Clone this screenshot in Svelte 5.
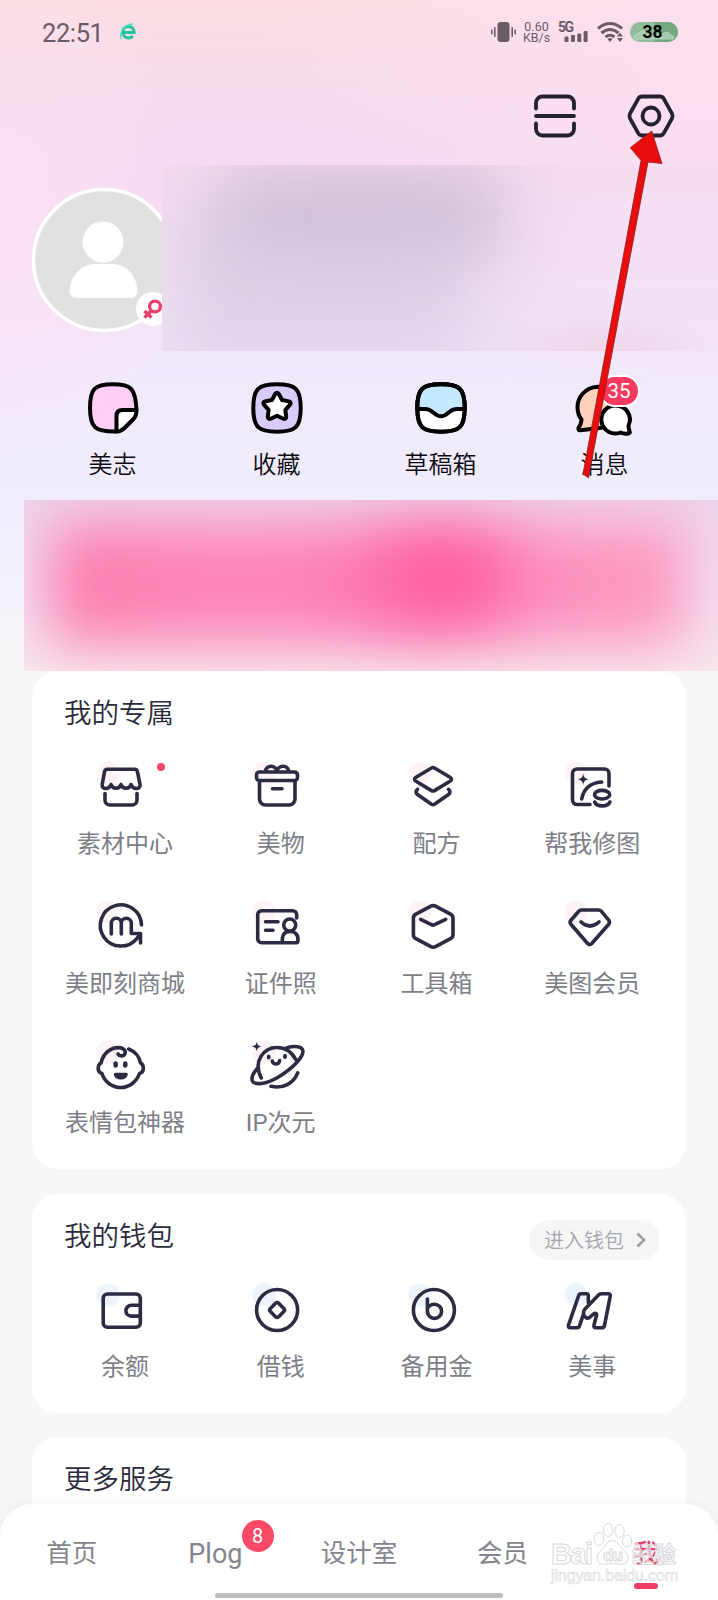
<script lang="ts">
	type Entry = { label: string; stroke: string; fill?: string; dot?: boolean };

	const exclusive: Entry[] = [
		{
			label: '素材中心',
			stroke:
				'M14.5 10.3h27a3 3 0 0 1 3 2.5L47 25.5C47.7 30.8 40 31 38 25.5 36.5 30.5 29.5 30.5 28 25.5 26.5 30.5 19.5 30.5 18 25.5 16 31 8.5 30.8 9.2 25.5l2.3-12.7a3 3 0 0 1 3-2.5zM12 34.5V41a5 5 0 0 0 5 5h22a5 5 0 0 0 5-5v-6.5',
			dot: true
		},
		{
			label: '美物',
			stroke:
				'M10.5 13h35a3 3 0 0 1 3 3v2.5a3 3 0 0 1-3 3h-35a3 3 0 0 1-3-3V16a3 3 0 0 1 3-3zM10.5 22v18a6 6 0 0 0 6 6h23.5a6 6 0 0 0 6-6V22M23.5 29.7h9.5M16.5 12.5C17 5.5 27 5.5 28 12.5 29 5.5 39 5.5 40 12.5'
		},
		{
			label: '配方',
			stroke:
				'M26.5 9q1.5-.8 3 0l15.5 9.3q3 2 0 4L29.5 31.6q-1.5.8-3 0L11 22.3q-3-2 0-4zM12.5 30.3q-3 2.7 0 5.2l14 9.8q1.5.9 3 0l14-9.8q3-2.5 0-5.2'
		},
		{
			label: '帮我修图',
			stroke:
				'M29 45.5H16a4.5 4.5 0 0 1-4.5-4.5V14.5A4.5 4.5 0 0 1 16 10h27.5a4.5 4.5 0 0 1 4.5 4.5V27M20.7 40C22.5 30.5 29 23.8 40.7 23M33.5 35.7a7.6 4.3 0 1 0 15.2 0a7.6 4.3 0 1 0-15.2 0M33.7 43c2 5.2 13 5.2 15.2 0',
			fill: 'M22.2 14.5c.7 4 1.7 5 5.6 5.8-3.900.8-4.900 1.800-5.600 5.800-.7-4-1.700-5-5.600-5.800 3.900-.8 4.900-1.800 5.600-5.800z'
		},
		{
			label: '美即刻商城',
			stroke:
				'M48.5 27A20.6 20.6 0 1 0 44 40.3L47.5 36M18.3 36V25.3a5 5 0 0 1 10 0V36M28.3 25.3a5 5 0 0 1 10 0v10.2h9.2V45'
		},
		{
			label: '证件照',
			stroke:
				'M47.7 20v-3.3a4 4 0 0 0-4-4H12.7a4 4 0 0 0-4 4v24a4 4 0 0 0 4 4H33.5M16.5 23.7H29M16.5 32.3H24M34.7 27a6 6 0 1 0 12 0a6 6 0 1 0-12 0M33.5 44.7c-1-9 3-11.2 7.3-11.2s8.7 2.2 8.2 9q-.2 2.2-2.5 2.2z'
		},
		{
			label: '工具箱',
			stroke:
				'M25.9 8.2q2.3-1.2 4.6 0l15 8q2.5 1.3 2.5 4v16.5q0 2.7-2.5 4l-15 8q-2.3 1.2-4.6 0l-15-8q-2.5-1.3-2.5-4V20.2q0-2.7 2.5-4zM15.7 21.3L28 27.3l12.7-6'
		},
		{
			label: '美图会员',
			stroke:
				'M20.5 12h17q1.7 0 2.7 1.2l7.5 9q1.6 2 0 4L30.8 45.5q-2.1 2-4.2 0L9.9 26.2q-1.6-2 0-4l7.9-9Q18.8 12 20.5 12zM20 24q9 8 18 0'
		},
		{
			label: '表情包神器',
			stroke:
				'M35.7 11C42 13.5 46.5 19 47.3 24.5 51.5 27.5 51.5 34 46.5 35.5 43.5 44 36 49.5 27.7 49.5S11.5 44 9 35.5C4 34 4 27.5 8.3 24.5 10 15 18 9.6 25.5 9.6c5 0 7.5 3 6.5 6s-5.5 3-7 .4',
			fill: 'M22.6 23.3a2 2.8 0 0 1 0 6.5a2 2.8 0 0 1 0-6.5zM32.3 23.3a2 2.8 0 0 1 0 6.5a2 2.8 0 0 1 0-6.5zM22.5 34.7h11q1.5 0 1.3 1.5c-.7 7-13.3 7-14 0q-.2-1.5 1.7-1.5z'
		},
		{
			label: 'IP次元',
			stroke:
				'M12.3 40C3.5 23 15 9.5 28 9.5c9 0 15 5 18.6 11.8M38 9.8C46 7.5 52.5 8.5 53.7 12c2 6-10 18.5-24.2 27C17 46.5 5 47.5 3.2 42.5 2.2 38.5 5 34 8.5 30.3M22 48.3c12 2.8 22.5-3 26.7-13.5M23.3 23c.8 4 6.5 4 7.3-.4',
			fill: 'M19.7 16.4a2 2.6 0 0 1 0 5.2a2 2.6 0 0 1 0-5.2zM36 15.8a2 2.6 0 0 1 0 5.2a2 2.6 0 0 1 0-5.2zM7.7 3.4c.7 3.600 1.400 4.300 5 5-3.600.7-4.300 1.400-5 5-.7-3.600-1.400-4.300-5-5 3.600-.7 4.300-1.400 5-5z'
		}
	];

	const wallet: Entry[] = [
		{
			label: '余额',
			stroke:
				'M14.5 13H43a4.3 4.3 0 0 1 4.3 4.3V42A4.3 4.3 0 0 1 43 46.3H14.5A4.3 4.3 0 0 1 10.2 42V17.3A4.3 4.3 0 0 1 14.5 13zM47 24.3h-8.7a5.4 5.4 0 0 0 0 10.8H47'
		},
		{
			label: '借钱',
			stroke:
				'M7.6 29a20.5 20.5 0 1 0 41 0a20.5 20.5 0 1 0-41 0M26.5 22.3q1.6-1.5 3.2 0l5.1 5.1q1.5 1.6 0 3.2l-5.1 5.1q-1.6 1.5-3.2 0l-5.1-5.1q-1.5-1.6 0-3.2z'
		},
		{
			label: '备用金',
			stroke:
				'M8.4 29a20.5 20.5 0 1 0 41 0a20.5 20.5 0 1 0-41 0M22.4 18V30.3a7.1 7.1 0 1 0 7.1-7.1q-4.5 0-7.1 4'
		},
		{
			label: '美事',
			stroke:
				'M27.3 21.5V14.8q0-2-1.8-2H20.2q-2.2 0-2.7 2.2L7.5 44.2q-.6 2.5 1.8 2.5H16q2 0 2.5-1.9L22.5 33M38 13.6q1-.8 2.5-.8h6.7q2.5 0 2 2.5L43.5 44.5q-.5 2.2-2.7 2.2H35q-2.6 0-2-2.5l2.5-10c.4-2-1.5-2.5-2.8-1.4l-4.2 3.7c-3 2-6-1.5-6-4.8q0-2.200 1.500-3.700z'
		}
	];

	const tabs = ['首页', 'Plog', '设计室', '会员', '我'];
	const active = '我';

	const SQUIRCLE =
		'M28 4.3C46.5 4.3 51.7 8.5 51.7 28S46.5 51.7 28 51.7 4.3 47.5 4.3 28 9.5 4.3 28 4.3z';
</script>

{#snippet grid(items: Entry[], tint: string)}
	<div class="grid">
		{#each items as item}
			<button class="entry">
				<span class="entry-icon">
					<svg width="56" height="56" viewBox="0 0 56 56">
						<circle class={tint} cx="15" cy="14" r="11.5" />
						<path class="line" d={item.stroke} />
						{#if item.fill}<path class="solid" d={item.fill} />{/if}
					</svg>
					{#if item.dot}<i class="dot"></i>{/if}
				</span>
				<span class="entry-label">{item.label}</span>
			</button>
		{/each}
	</div>
{/snippet}

<div class="page">
	<div class="status">
		<span class="time">22:51</span>
		<svg class="browser" width="16" height="18" viewBox="0 0 16 18">
			<path d="M3 9.5h11.2A5.8 5.8 0 1 0 12.8 13" fill="none" stroke="#22c3a0" stroke-width="3" />
			<path d="M1 16C-1 9 5 1 13 1" fill="none" stroke="#4fdcc0" stroke-width="1.3" />
		</svg>
		<span class="spacer"></span>
		<svg width="25" height="20" viewBox="0 0 25 20" fill="#6b5b67">
			<rect x="6.5" y="0" width="12" height="20" rx="3" />
			<rect x="3" y="5" width="1.6" height="10" rx=".8" />
			<rect x="0" y="7.5" width="1.6" height="5" rx=".8" />
			<rect x="20.4" y="5" width="1.6" height="10" rx=".8" />
			<rect x="23.4" y="7.5" width="1.6" height="5" rx=".8" />
		</svg>
		<span class="speed"><span>0.60</span><span>KB/s</span></span>
		<svg class="signal" width="31" height="22" viewBox="0 0 31 22" fill="#6b5b67">
			<text x="0" y="10.5" font-size="14" font-weight="700" textLength="16">5G</text>
			<rect x="6.5" y="15.5" width="4" height="5.5" rx="1" />
			<rect x="13" y="14" width="4" height="7" rx="1" />
			<rect x="19.3" y="12.5" width="4" height="8.5" rx="1" />
			<rect x="25.6" y="10" width="4" height="11" rx="1" />
		</svg>
		<svg class="wifi" width="28" height="20" viewBox="0 0 28 20">
			<g fill="none" stroke="#6b5b67" stroke-width="3">
				<path d="M1 6.5q12-10 24 0M4.5 11q8.5-7 17 0M8.5 15q4.5-3.5 9 0" />
			</g>
			<path d="M10.5 17q2.5-2 5 0L13 20zM20 14.5l3-4 3 4zM20 16l3 4 3-4z" fill="#6b5b67" />
		</svg>
		<span class="battery">
			<svg width="48" height="20" viewBox="0 0 48 20">
				<rect width="48" height="20" rx="10" fill="#8fbd9b" />
				<path d="M24 0h14a10 10 0 0 1 0 20H24z" fill="#73a881" />
				<path
					d="M5 17c-2-4 2-6 4-5 1-4 6-4 7-1 3-2 5 0 5 3h6c0-3 4-5 6-2 2-3 7-2 7 1 4 0 4 3 3 4z"
					fill="#a3cbad"
					stroke="#c6e0cb"
					stroke-width=".7"
				/>
			</svg>
			<b>38</b>
		</span>
	</div>

	<div class="toolbar">
		<svg width="44" height="44" viewBox="0 0 44 44" class="tool">
			<path d="M3 14.5V9a6.5 6.5 0 0 1 6.5-6.5h25A6.5 6.5 0 0 1 41 9v5.5M3 29.5V35a6.5 6.5 0 0 0 6.5 6.5h25A6.5 6.5 0 0 0 41 35v-5.5M3 22h38" />
		</svg>
		<svg width="48" height="44" viewBox="0 0 48 44" class="tool">
			<path d="M15 2.5h18q2.5 0 3.7 2.1l8.3 14.9q1.2 2.5 0 5l-8.3 14.9q-1.2 2.1-3.7 2.1H15q-2.5 0-3.7-2.1L3 24.5q-1.2-2.5 0-5L11.3 4.6Q12.5 2.5 15 2.5z" />
			<circle cx="24" cy="22" r="8.5" />
		</svg>
	</div>

	<div class="profile">
		<div class="avatar">
			<svg width="144" height="144" viewBox="0 0 144 144">
				<circle cx="72" cy="72" r="70.5" fill="#e1e1e1" stroke="#fff" stroke-width="3.5" />
				<circle cx="71" cy="54" r="20.5" fill="#fff" />
				<path d="M37.5 103C38 86 52 76 62 76h19c12 0 23.5 10 24.5 27 0 4-2 7-7 7H45c-5.5 0-7.5-3-7.5-7z" fill="#fff" />
				<circle cx="121" cy="121" r="17" fill="#fff" />
				<g fill="none" stroke="#e8416b" stroke-width="3.4">
					<circle cx="123" cy="118.5" r="5.4" />
					<path d="M119.5 122.5l-7 7M112.5 123l7 6.5" />
				</g>
			</svg>
		</div>
		<div class="redacted"></div>
	</div>

	<div class="shortcuts">
		<button class="shortcut">
			<svg width="56" height="56" viewBox="0 0 56 56">
				<path d="M28 4.3c18.5 0 22.5 4.2 23.5 25.7L34 51q-3 .7-6 .7C9.5 51.7 5 47.5 5 28S9.5 4.3 28 4.3z" fill="#ffcdf5" stroke="none" />
				<path d="M51.5 30H37.5q-6 0-6 6v15.5q4 .3 8-3.5l9-9q3-3 3-9z" fill="#fff" />
				<path d="M31.5 51.5C10 52 5 47.5 5 28S9.5 4.3 28 4.3 50.5 8.5 51.5 30" fill="none" />
			</svg>
			<span>美志</span>
		</button>
		<button class="shortcut">
			<svg width="56" height="56" viewBox="0 0 56 56">
				<path d={SQUIRCLE} fill="#d9ccfa" />
				<path d="M26.2 14q1.8-2.5 3.6 0l3.3 6 6.8 1.4q2.8 1 1.2 3.3l-4.7 5.2.8 6.8q-.2 3-2.9 2L28 35.8l-6.3 2.9q-2.7 1-2.9-2l.8-6.8-4.7-5.2q-1.6-2.3 1.2-3.3l6.8-1.4z" fill="#fff" />
			</svg>
			<span>收藏</span>
		</button>
		<button class="shortcut">
			<svg width="56" height="56" viewBox="0 0 56 56">
				<path d={SQUIRCLE} fill="#fff" />
				<path d="M4.3 29C4 8.5 9.5 4.3 28 4.3S52 8.5 51.7 29H44c-8 0-9.5 7.3-16 7.3S20 29 12 29z" fill="#c4e9ff" />
				<path d={SQUIRCLE} fill="none" />
			</svg>
			<span>草稿箱</span>
		</button>
		<button class="shortcut">
			<svg width="56" height="56" viewBox="-0.5 0 56 56">
				<path d="M20 6.8C7 7.5 0 18 0 27c0 6 2 10 4 12.5 0 4-1.5 6-3 8.5-.3 1.7.3 2.5 2 2.2L22 48l12-3V8z" fill="#ffd0bd" />
				<path d="M38.5 25.5a14 14 0 1 0 4.5 27q4 2 8.5.8 1.5-.8.5-2.3-1-2.5-1-5.5a14 14 0 0 0-12.5-20z" fill="#fff" />
			</svg>
			<i class="count">35</i>
			<span>消息</span>
		</button>
	</div>

	<div class="banner"></div>

	<section class="card">
		<div class="card-head"><h2>我的专属</h2></div>
		{@render grid(exclusive, 'pink')}
	</section>

	<section class="card">
		<div class="card-head">
			<h2>我的钱包</h2>
			<button class="pill">
				进入钱包
				<svg width="10" height="16" viewBox="0 0 10 16"><path d="M1.5 1.5L8 8l-6.5 6.5" /></svg>
			</button>
		</div>
		{@render grid(wallet, 'blue')}
	</section>

	<section class="card">
		<div class="card-head"><h2>更多服务</h2></div>
	</section>

	<nav class="tabbar">
		{#each tabs as tab}
			<button class="tab" class:active={tab === active} class:latin={tab === 'Plog'}>
				{tab}
				{#if tab === 'Plog'}<i class="badge">8</i>{/if}
			</button>
		{/each}
		<i class="home-indicator"></i>
	</nav>

	<svg class="watermark" width="134" height="66" viewBox="0 0 134 66">
		<g fill="#fff" fill-opacity=".55" stroke="#d9d9dd" stroke-width="1">
			<text x="3" y="43" font-size="29" font-weight="700" textLength="42">Bai</text>
			<path d="M49 36c1-6 7-8 9-12 3-6 10-6 13 0 2 4 8 6 9 12 0 7-5 8-10 7q-5-1-11 0c-5 1-10 0-10-7z" />
			<ellipse cx="51" cy="18" rx="4.7" ry="6.5" />
			<ellipse cx="60" cy="9" rx="4.7" ry="6.5" />
			<ellipse cx="71.5" cy="10" rx="4.7" ry="6.5" />
			<ellipse cx="79" cy="20" rx="4.7" ry="6" />
			<text x="55" y="40" font-size="17" font-weight="700" textLength="20">du</text>
			<text x="84" y="41" font-size="22" font-weight="700" textLength="44">经验</text>
			<text x="3" y="60" font-size="16" font-weight="400" textLength="127" stroke-width=".6">jingyan.baidu.com</text>
		</g>
	</svg>

	<svg class="arrow" width="90" height="360" viewBox="0 0 90 360">
		<path d="M3 354L61 40.5 50.3 27.7 71.7 11 82 43.5 68 42 8.5 358z" />
	</svg>
</div>

<style>
	:global(body) {
		margin: 0;
	}

	.page {
		position: relative;
		width: 718px;
		height: 1600px;
		overflow: hidden;
		font-family: Roboto, 'Noto Sans CJK SC', sans-serif;
		background:
			radial-gradient(ellipse 200px 260px at 0 200px, rgba(252, 225, 240, 0.9), transparent),
			radial-gradient(ellipse 460px 340px at 718px 60px, rgba(253, 224, 240, 0.9), transparent),
			linear-gradient(
				#fddfe3 0,
				#f8dde9 60px,
				#f6dcf0 120px,
				#f4dbf3 190px,
				#f3e4f8 300px,
				#f1e9fb 370px,
				#f0edfb 480px,
				#f2f2fd 570px,
				#f5f7fa 630px,
				#f7f7f7 660px
			);
	}

	button {
		padding: 0;
		border: 0;
		background: none;
		font: inherit;
		color: inherit;
	}

	svg {
		display: block;
		flex: none;
		overflow: visible;
	}

	i {
		font-style: normal;
	}

	.status {
		display: flex;
		align-items: center;
		height: 64px;
		padding: 0 40px 0 42px;
		box-sizing: border-box;
		color: #6b5b67;
	}

	.time {
		font-size: 25.5px;
		letter-spacing: -0.4px;
		padding-top: 2px;
	}

	.browser {
		margin-left: 16px;
	}

	.spacer {
		flex: 1;
	}

	.speed {
		display: flex;
		flex-direction: column;
		align-items: center;
		width: 27px;
		margin-left: 7px;
		font-size: 12.5px;
		line-height: 11px;
	}

	.signal {
		margin-left: 8px;
	}

	.wifi {
		margin-left: 8px;
	}

	.battery {
		display: grid;
		place-items: center;
		margin-left: 5px;
	}

	.battery > * {
		grid-area: 1 / 1;
	}

	.battery b {
		position: relative;
		color: #000;
		font-size: 17.5px;
		line-height: 20px;
		margin-right: 3px;
	}

	.toolbar {
		display: flex;
		justify-content: flex-end;
		align-items: center;
		gap: 50px;
		height: 101px;
		padding: 3px 43.5px 0 0;
		box-sizing: border-box;
	}

	.tool {
		fill: none;
		stroke: #252130;
		stroke-width: 3.8px;
		stroke-linecap: round;
	}

	.profile {
		display: flex;
		height: 186px;
	}

	.avatar {
		width: 130px;
		margin-left: 32px;
		padding-top: 23px;
		overflow: hidden;
		flex: none;
		box-sizing: border-box;
	}

	.avatar svg {
		margin-left: -0.5px;
	}

	.redacted {
		position: relative;
		flex: 1;
		overflow: hidden;
		background:
			radial-gradient(ellipse 110px 40px at 440px 186px, rgba(240, 208, 226, 0.7), transparent),
			linear-gradient(#f6ddef, #f5e0f4 40%, #f1e3f7);
	}

	.redacted::before,
	.redacted::after {
		content: '';
		position: absolute;
		filter: blur(38px);
	}

	.redacted::before {
		left: 60px;
		top: 18px;
		width: 280px;
		height: 62px;
		background: rgba(178, 166, 190, 0.75);
	}

	.redacted::after {
		left: 10px;
		top: 40px;
		width: 300px;
		height: 170px;
		background: rgba(203, 198, 218, 0.5);
	}

	.shortcuts {
		display: grid;
		grid-template-columns: repeat(4, 164px);
		height: 149px;
		padding: 28.5px 31px 0 30.5px;
		box-sizing: border-box;
	}

	.shortcut {
		position: relative;
		display: flex;
		flex-direction: column;
		align-items: center;
		gap: 13px;
		height: 101px;
		font-size: 24px;
		font-weight: 350;
		line-height: 32px;
		color: #0c0a10;
	}

	.shortcut svg {
		stroke: #000;
		stroke-width: 4px;
		stroke-linejoin: round;
	}

	.count {
		position: absolute;
		top: -5px;
		left: 76px;
		padding: 0 7px;
		border: 2px solid #fff;
		border-radius: 16px;
		background: #fb3a60;
		color: #fff;
		font-size: 20.5px;
		font-weight: 400;
		line-height: 28px;
	}

	.banner {
		position: relative;
		height: 171px;
		margin-left: 24px;
		overflow: hidden;
		background: linear-gradient(#eed6ea, #f4e0f0 60%, #f8e8ee);
	}

	.banner::before,
	.banner::after {
		content: '';
		position: absolute;
	}

	.banner::before {
		inset: 22px 32px 26px 26px;
		background: linear-gradient(90deg, #fb7eae, #fd86b6 30%, #fc7fb3 50%, #fc8fbc 70%, #fd9bc1);
		filter: blur(28px);
	}

	.banner::after {
		left: 355px;
		top: 38px;
		width: 130px;
		height: 78px;
		border-radius: 30px;
		background: #ff5596;
		filter: blur(34px);
	}

	.card {
		width: 654px;
		margin: 0 auto 24.5px 32px;
		padding: 25px 15px 30px;
		box-sizing: border-box;
		border-radius: 26px;
		background: #fff;
	}

	.card-head {
		display: flex;
		justify-content: space-between;
		align-items: flex-start;
		height: 36px;
		padding: 0 11px 0 17px;
		margin-bottom: 26.5px;
	}

	h2 {
		margin: 0;
		font-size: 27.5px;
		font-weight: 350;
		line-height: 36px;
		color: #2a2a3c;
	}

	.pill {
		display: flex;
		align-items: center;
		gap: 12px;
		height: 40px;
		margin-top: 1px;
		padding: 0 14px 0 15px;
		border-radius: 20px;
		background: #f6f6f7;
		color: #a5a5ac;
		font-size: 20px;
		font-weight: 350;
	}

	.pill path {
		fill: none;
		stroke: #9d9da4;
		stroke-width: 2.5px;
	}

	.grid {
		display: grid;
		grid-template-columns: repeat(4, 155.8px);
		row-gap: 38px;
	}

	.entry {
		display: flex;
		flex-direction: column;
		align-items: center;
		gap: 13.5px;
	}

	.entry-icon {
		position: relative;
		margin-right: 7px;
	}

	.entry-label {
		font-size: 24px;
		font-weight: 400;
		line-height: 32px;
		color: #7e7e87;
		white-space: nowrap;
	}

	.line {
		fill: none;
		stroke: #2b2b42;
		stroke-width: 3.6px;
		stroke-linecap: round;
		stroke-linejoin: round;
	}

	.solid {
		fill: #2b2b42;
	}

	.pink {
		fill: #fff3f6;
	}

	.blue {
		fill: #eef4fe;
	}

	.dot {
		position: absolute;
		top: 4px;
		right: -16px;
		width: 8px;
		height: 8px;
		border-radius: 50%;
		background: #f8476a;
	}

	.tabbar {
		position: absolute;
		left: 0;
		right: 0;
		bottom: 0;
		display: grid;
		grid-template-columns: repeat(5, 1fr);
		height: 96px;
		border-radius: 32px 32px 0 0;
		background: #fff;
		box-shadow: 0 -2px 10px rgba(0, 0, 0, 0.04);
	}

	.tab {
		position: relative;
		height: 93px;
		font-size: 25.5px;
		font-weight: 400;
		color: #84848d;
	}

	.tab.latin {
		padding-top: 7px;
		font-size: 27px;
	}

	.tab.active {
		color: #e8406a;
		font-weight: 500;
	}

	.tab.active::after {
		content: '';
		position: absolute;
		left: 60px;
		top: 79px;
		width: 24px;
		height: 6px;
		border-radius: 3px;
		background: #f13c66;
	}

	.badge {
		position: absolute;
		left: 98px;
		top: 16px;
		width: 32px;
		border-radius: 50%;
		background: #fa4a68;
		color: #fff;
		font-size: 20px;
		line-height: 32px;
	}

	.home-indicator {
		position: absolute;
		left: 215px;
		bottom: 2px;
		width: 288px;
		height: 5px;
		border-radius: 3px;
		background: #bebebe;
	}

	.watermark {
		position: absolute;
		left: 548px;
		top: 1521px;
		font-family: 'Liberation Sans', 'Noto Sans CJK SC', sans-serif;
	}

	.arrow {
		position: absolute;
		left: 580px;
		top: 120px;
		fill: #e90d0d;
		stroke: #8f1d22;
		stroke-width: 0.8px;
	}
</style>
